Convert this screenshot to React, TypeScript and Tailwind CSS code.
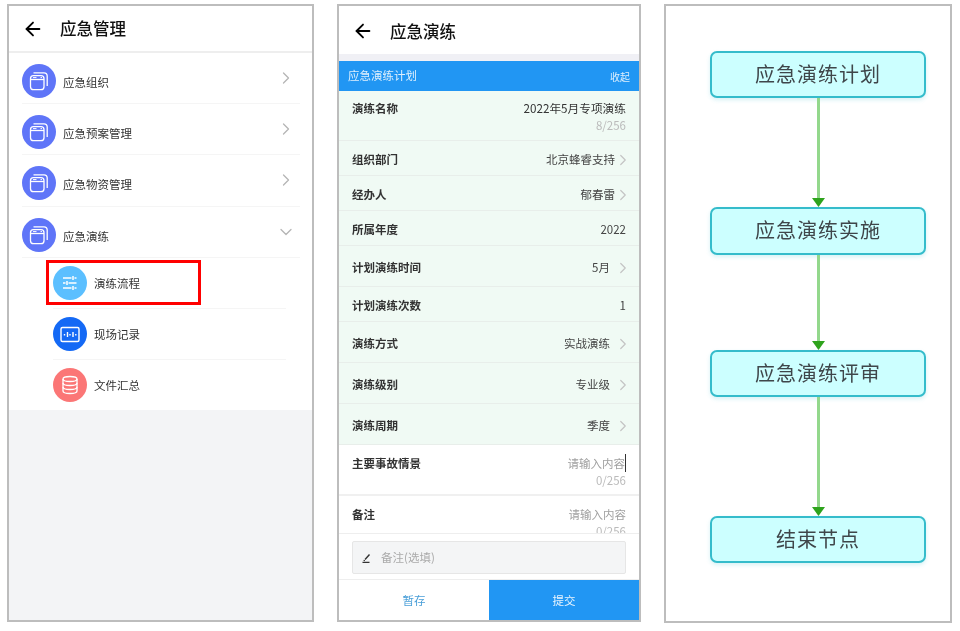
import { ArrowLeft, ChevronDown, ChevronRight } from 'lucide-react';

const menuRows = [
  { label: '应急组织', height: 'h-[51px]' },
  { label: '应急预案管理', height: 'h-[51px]' },
  { label: '应急物资管理', height: 'h-[52px]' },
];

const formRows = [
  { label: '组织部门', value: '北京蜂睿支持', height: 'h-[35px]', arrow: true, gap: '-mr-[1px]' },
  { label: '经办人', value: '郁春雷', height: 'h-[35px]', arrow: true, gap: '-mr-[1px]' },
  { label: '所属年度', value: '2022', height: 'h-[35px]', arrow: false, gap: '' },
  { label: '计划演练时间', value: '5月', height: 'h-[41px]', arrow: true, gap: 'mr-[4px]' },
  { label: '计划演练次数', value: '1', height: 'h-[35px]', arrow: false, gap: '' },
  { label: '演练方式', value: '实战演练', height: 'h-[41px]', arrow: true, gap: 'mr-[4px]' },
  { label: '演练级别', value: '专业级', height: 'h-[41px]', arrow: true, gap: 'mr-[4px]' },
  { label: '演练周期', value: '季度', height: 'h-[41px]', arrow: true, gap: 'mr-[4px]' },
];

function WindowsIcon() {
  return (
    <svg viewBox="0 0 34 34" className="h-[34px] w-[34px]" fill="none" stroke="#fff" strokeWidth="1.3">
      <rect x="8.5" y="11.7" width="13.5" height="14" rx="3" />
      <path d="M8.5 15.5h13.5" />
      <path d="M11 13.6h3.5M18.5 13.6h1.5" strokeWidth="1" />
      <path d="M11.5 8.8h10.5a3.2 3.2 0 0 1 3.2 3.2v10" />
    </svg>
  );
}

function SlidersIcon() {
  return (
    <svg viewBox="0 0 34 34" className="h-[34px] w-[34px]" fill="none" stroke="#fff" strokeWidth="1.7">
      <path d="M10 12h8.5M21.5 12h2M10 17h2.5M15.5 17h8M10 22h8.5M21.5 22h2" />
      <path d="M20 10v4M14 15v4M20 20v4" strokeWidth="1.5" />
    </svg>
  );
}

function RecordIcon() {
  return (
    <svg viewBox="0 0 34 34" className="h-[34px] w-[34px]" fill="none" stroke="#fff" strokeWidth="1.4">
      <rect x="8" y="10.5" width="18" height="14" rx="1.5" />
      <path d="M11.5 17v1.5M14.5 15v5M17 17v1.5M20 15v5M22.8 17v1.5" />
    </svg>
  );
}

function DatabaseIcon() {
  return (
    <svg viewBox="0 0 34 34" className="h-[34px] w-[34px]" fill="none" stroke="#fff" strokeWidth="1.3">
      <ellipse cx="17" cy="11" rx="7" ry="2.5" />
      <path d="M10 11v12c0 1.4 3.1 2.5 7 2.5s7-1.1 7-2.5V11" />
      <path d="M10 15c0 1.4 3.1 2.5 7 2.5s7-1.1 7-2.5M10 19c0 1.4 3.1 2.5 7 2.5s7-1.1 7-2.5" />
    </svg>
  );
}

function FlowBox({ label, height }: { label: string; height: string }) {
  return (
    <div className={`${height} flex w-[216px] items-center justify-center rounded-[7px] border-2 border-[#35bccb] bg-[#ccffff] pb-[2px] text-[20px] tracking-[1px] text-[#3f464a] shadow-[0_2px_4px_rgba(53,188,203,0.2)]`}>
      {label}
    </div>
  );
}

function FlowLine({ height }: { height: string }) {
  return (
    <div className={`${height} flex w-[216px] flex-col items-center`}>
      <div className="w-[3px] flex-1 bg-[#93d88c]" />
      <svg viewBox="0 0 13 9" className="h-[9px] w-[13px] shrink-0">
        <path d="M0 0h13L6.5 9z" fill="#2ea31c" />
      </svg>
    </div>
  );
}

export default function App() {
  return (
    <div className="flex h-[631px] w-[960px] gap-[23px] bg-white pl-[7px] pt-[4px] font-['Noto_Sans_CJK_SC',sans-serif] blur-[0.5px]">
      {/* Menu screen */}
      <div className="relative flex h-[618px] w-[307px] flex-col border-2 border-[#bdbdbd] bg-[#f3f4f6]">
        <div className="flex h-[47px] items-center border-b-2 border-[#eeeeee] bg-white pl-[13px]">
          <ArrowLeft className="h-[22px] w-[22px] text-black" strokeWidth={2} />
          <span className="ml-[16px] text-[16.5px] font-medium text-[#111]">应急管理</span>
        </div>

        <div className="bg-white">
          {menuRows.map((row) => (
            <div key={row.label} className={`${row.height} ml-[13px] mr-[12px] flex items-start border-b border-[#f5f5f5] pt-[11px]`}>
              <div className="flex h-[34px] w-[34px] items-center justify-center rounded-full bg-[#5f75f8]">
                <WindowsIcon />
              </div>
              <span className="ml-[7px] flex-1 text-[11.5px] leading-[36px] text-[#333]">{row.label}</span>
              <ChevronRight className="mr-[4px] mt-[4px] h-[20px] w-[20px] text-[#b5b5b5]" strokeWidth={1.5} />
            </div>
          ))}
          <div className="ml-[13px] mr-[12px] flex h-[51px] items-start border-b border-[#f5f5f5] pt-[11px]">
            <div className="flex h-[34px] w-[34px] items-center justify-center rounded-full bg-[#5f75f8]">
              <WindowsIcon />
            </div>
            <span className="ml-[7px] flex-1 text-[11.5px] leading-[36px] text-[#333]">应急演练</span>
            <ChevronDown className="mr-[4px] mt-[4px] h-[20px] w-[20px] text-[#b5b5b5]" strokeWidth={1.5} />
          </div>

          <div className="ml-[44px] mr-[26px]">
            <div className="flex h-[51px] items-start border-b border-[#f5f5f5] pt-[8px]">
              <div className="rounded-full bg-[#5bbfff]"><SlidersIcon /></div>
              <span className="ml-[7px] text-[11.5px] leading-[34px] text-[#333]">演练流程</span>
            </div>
            <div className="flex h-[51px] items-start border-b border-[#f5f5f5] pt-[8px]">
              <div className="rounded-full bg-[#1469f5]"><RecordIcon /></div>
              <span className="ml-[7px] text-[11.5px] leading-[34px] text-[#333]">现场记录</span>
            </div>
            <div className="flex h-[50px] items-start pt-[8px]">
              <div className="rounded-full bg-[#fb7676]"><DatabaseIcon /></div>
              <span className="ml-[7px] text-[11.5px] leading-[34px] text-[#333]">文件汇总</span>
            </div>
          </div>
        </div>

        {/* Highlight around the selected entry */}
        <div className="absolute left-[37px] top-[254px] h-[45px] w-[155px] border-[3px] border-[#ff0000]" />
      </div>

      {/* Form screen */}
      <div className="flex h-[618px] w-[304px] flex-col border-2 border-[#bdbdbd] bg-white">
        <div className="flex h-[48px] shrink-0 items-center pl-[13px] pt-[2px]">
          <ArrowLeft className="h-[22px] w-[22px] text-black" strokeWidth={2} />
          <span className="ml-[16px] text-[16.5px] font-medium text-[#111]">应急演练</span>
        </div>
        <div className="h-[7px] shrink-0 bg-[#f0f0f5]" />
        <div className="flex h-[30px] shrink-0 items-center justify-between bg-[#2196f3] pl-[9px] pr-[9px] text-white/85">
          <span className="text-[11.5px]">应急演练计划</span>
          <span className="text-[10px]">收起</span>
        </div>

        <div className="h-[442px] shrink-0 overflow-hidden">
          <div className="h-[50px] border-b border-[#e8eeea] bg-[#f0faf4] px-[13px] pt-[8px]">
            <div className="flex items-center justify-between text-[11.5px] leading-[18px]">
              <span className="font-bold text-[#333]">演练名称</span>
              <span className="text-[11.7px] text-[#333]">2022年5月专项演练</span>
            </div>
            <div className="text-right text-[11.5px] leading-[16px] text-[#bbb]">8/256</div>
          </div>

          {formRows.map((row) => (
            <div key={row.label} className={`${row.height} flex items-center border-b border-[#e8eeea] bg-[#f0faf4] px-[13px] pt-[3px] text-[11.5px]`}>
              <span className="flex-1 font-bold text-[#333]">{row.label}</span>
              <span className={`${row.gap} text-[#444]`}>{row.value}</span>
              {row.arrow && <ChevronRight className="-mr-[6px] h-[18px] w-[18px] text-[#c4c4c4]" strokeWidth={1.6} />}
            </div>
          ))}

          <div className="h-[51px] border-b-2 border-[#f0f0f0] px-[13px] pt-[9px]">
            <div className="flex items-center justify-between text-[11.5px] leading-[18px]">
              <span className="font-bold text-[#333]">主要事故情景</span>
              <span className="border-r border-[#333] text-[#a0a0a0]">请输入内容</span>
            </div>
            <div className="text-right text-[11.5px] leading-[16px] text-[#bbb]">0/256</div>
          </div>
          <div className="px-[13px] pt-[9px]">
            <div className="flex items-center justify-between text-[11.5px] leading-[18px]">
              <span className="font-bold text-[#333]">备注</span>
              <span className="text-[#a0a0a0]">请输入内容</span>
            </div>
            <div className="text-right text-[11.5px] leading-[16px] text-[#bbb]">0/256</div>
          </div>
        </div>

        <div className="flex h-[47px] shrink-0 items-start border-y border-[#eeeeee] px-[13px] pt-[7px]">
          <div className="flex h-[33px] w-full items-center rounded-[2px] border border-[#e6e6e6] bg-[#f4f5f6] pl-[9px]">
            <svg viewBox="0 0 10 10" className="h-[10px] w-[10px]" fill="none" stroke="#333" strokeWidth="1.4">
              <path d="M3 6.5 7.5 1.5M2.5 7l-.5 1M.5 9.5h7" />
            </svg>
            <span className="ml-[9px] text-[11.5px] text-[#aaa]">备注(选填)</span>
          </div>
        </div>

        <div className="flex flex-1 text-[11.5px]">
          <div className="flex w-[150px] items-center justify-center pt-[2px] text-[#4a9fd8]">暂存</div>
          <div className="flex flex-1 items-center justify-center bg-[#2196f3] pt-[2px] text-white/90">提交</div>
        </div>
      </div>

      {/* Flow chart */}
      <div className="flex h-[619px] w-[288px] flex-col border-2 border-[#bdbdbd] bg-white pl-[44px] pt-[45px]">
        <FlowBox label="应急演练计划" height="h-[47px]" />
        <FlowLine height="h-[109px]" />
        <FlowBox label="应急演练实施" height="h-[48px]" />
        <FlowLine height="h-[95px]" />
        <FlowBox label="应急演练评审" height="h-[47px]" />
        <FlowLine height="h-[119px]" />
        <FlowBox label="结束节点" height="h-[47px]" />
      </div>
    </div>
  );
}
